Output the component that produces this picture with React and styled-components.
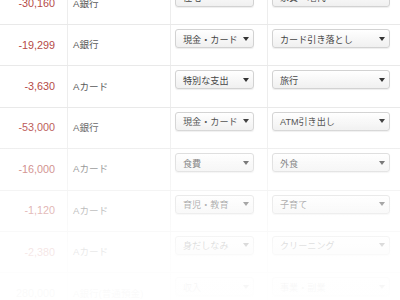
import styled, { createGlobalStyle } from 'styled-components'

const GlobalStyle = createGlobalStyle`
  html, body {
    margin: 0;
    padding: 0;
    background: #fff;
  }
  body {
    font-family: 'Liberation Sans', 'Noto Sans CJK JP', sans-serif;
    overflow: hidden;
  }
`

const rows = [
  { amount: '-30,160', account: 'A銀行', large: '住宅', middle: '家賃・地代' },
  { amount: '-19,299', account: 'A銀行', large: '現金・カード', middle: 'カード引き落とし' },
  { amount: '-3,630', account: 'Aカード', large: '特別な支出', middle: '旅行' },
  { amount: '-53,000', account: 'A銀行', large: '現金・カード', middle: 'ATM引き出し' },
  { amount: '-16,000', account: 'Aカード', large: '食費', middle: '外食' },
  { amount: '-1,120', account: 'Aカード', large: '育児・教育', middle: '子育て' },
  { amount: '-2,380', account: 'Aカード', large: '身だしなみ', middle: 'クリーニング' },
  { amount: '280,000', account: 'A銀行(普通預金)', large: '収入', middle: '事業・副業', income: true },
]

const Frame = styled.div`
  position: relative;
  width: 400px;
  height: 300px;
  overflow: hidden;
  background: #fff;
`

const Table = styled.div`
  display: flex;
  flex-direction: column;
  margin-top: -16.4px;
`

const Row = styled.div`
  display: grid;
  grid-template-columns: 68px 103px 97px 1fr;
  height: 41.4px;
  box-sizing: border-box;
  border-bottom: 1px solid #e9e9e9;
`

const Cell = styled.div`
  display: flex;
  align-items: center;
  box-sizing: border-box;
  border-right: 1px solid #ededed;
  &:last-child {
    border-right: none;
  }
`

const AmountCell = styled(Cell)`
  justify-content: flex-end;
  padding-right: 12px;
  padding-bottom: 1px;
  font-size: 10.8px;
  color: ${props => props.income ? '#555' : '#b54a47'};
`

const AccountCell = styled(Cell)`
  padding-left: 5px;
  padding-bottom: 2px;
  font-size: 9.6px;
  color: #5a5a5a;
  white-space: nowrap;
`

const SelectCell = styled(Cell)`
  align-items: flex-start;
  padding: 4px 4px 0 4px;
`

const Select = styled.div`
  display: flex;
  align-items: center;
  justify-content: space-between;
  box-sizing: border-box;
  width: ${props => props.width}px;
  height: 19px;
  padding: 0 4px 0 7px;
  border: 1px solid #d2d2d2;
  border-radius: 3px;
  background: linear-gradient(#ffffff, #f0f0f0);
  box-shadow: 0 1px 1px rgba(0, 0, 0, 0.07);
  font-size: 9.1px;
  color: #454545;
  white-space: nowrap;
`

const Caret = styled.span`
  flex: 0 0 auto;
  width: 0;
  height: 0;
  border-left: 3.5px solid transparent;
  border-right: 3.5px solid transparent;
  border-top: 4px solid #333;
`

const Fade = styled.div`
  position: absolute;
  inset: 0;
  pointer-events: none;
  background: linear-gradient(
    to bottom,
    rgba(255, 255, 255, 0) 0px,
    rgba(255, 255, 255, 0) 105px,
    rgba(255, 255, 255, 0.12) 130px,
    rgba(255, 255, 255, 0.4) 170px,
    rgba(255, 255, 255, 0.6) 210px,
    rgba(255, 255, 255, 0.86) 250px,
    rgba(255, 255, 255, 0.97) 290px
  );
`

const App = () => (
  <Frame>
    <GlobalStyle />
    <Table>
      {rows.map((row, i) => (
        <Row key={i}>
          <AmountCell income={row.income}>{row.amount}</AmountCell>
          <AccountCell>{row.account}</AccountCell>
          <SelectCell>
            <Select width={79}>
              <span>{row.large}</span>
              <Caret />
            </Select>
          </SelectCell>
          <SelectCell>
            <Select width={118}>
              <span>{row.middle}</span>
              <Caret />
            </Select>
          </SelectCell>
        </Row>
      ))}
    </Table>
    <Fade />
  </Frame>
)

export default App
